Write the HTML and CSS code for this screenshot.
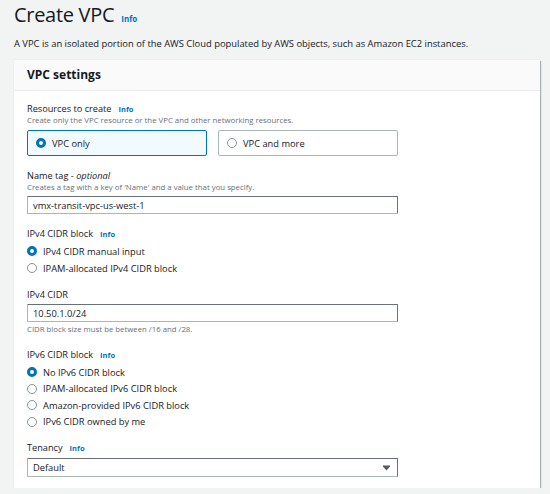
FILE: index.html
```html
<!DOCTYPE html>
<html lang="en">
<head>
<meta charset="utf-8">
<title>Create VPC</title>
<link rel="stylesheet" href="styles.css">
</head>
<body>
<div class="page">
  <h1 class="title">Create VPC<a class="info info-title">Info</a></h1>
  <p class="lead">A VPC is an isolated portion of the AWS Cloud populated by AWS objects, such as Amazon EC2 instances.</p>

  <section class="card">
    <header class="card-head">VPC settings</header>
    <div class="card-body">

      <div class="field">
        <div class="label">Resources to create<a class="info">Info</a></div>
        <div class="desc">Create only the VPC resource or the VPC and other networking resources.</div>
        <div class="tiles">
          <div class="tile selected"><span class="radio on"></span>VPC only</div>
          <div class="tile"><span class="radio"></span>VPC and more</div>
        </div>
      </div>

      <div class="field gap-md">
        <div class="label">Name tag - <em>optional</em></div>
        <div class="desc">Creates a tag with a key of 'Name' and a value that you specify.</div>
        <div class="input">vmx-transit-vpc-us-west-1</div>
      </div>

      <div class="field gap-md">
        <div class="label">IPv4 CIDR block<a class="info">Info</a></div>
        <div class="radios">
          <div class="opt"><span class="radio on"></span>IPv4 CIDR manual input</div>
          <div class="opt"><span class="radio"></span>IPAM-allocated IPv4 CIDR block</div>
        </div>
      </div>

      <div class="field gap-sm">
        <div class="label">IPv4 CIDR</div>
        <div class="input">10.50.1.0/24</div>
        <div class="desc help">CIDR block size must be between /16 and /28.</div>
      </div>

      <div class="field gap-lg">
        <div class="label">IPv6 CIDR block<a class="info">Info</a></div>
        <div class="radios six">
          <div class="opt"><span class="radio on"></span>No IPv6 CIDR block</div>
          <div class="opt"><span class="radio"></span>IPAM-allocated IPv6 CIDR block</div>
          <div class="opt"><span class="radio"></span>Amazon-provided IPv6 CIDR block</div>
          <div class="opt"><span class="radio"></span>IPv6 CIDR owned by me</div>
        </div>
      </div>

      <div class="field gap-sm">
        <div class="label">Tenancy<a class="info">Info</a></div>
        <div class="input select">
          <span>Default</span>
          <svg class="caret" width="7" height="6" viewBox="0 0 7 6"><path d="M0 0.5 H7 V1.5 L3.5 5.5 L0 1.5 Z" fill="#545b64"/></svg>
        </div>
      </div>

    </div>
  </section>
</div>
</body>
</html>
```

FILE: styles.css
```css
* { box-sizing: border-box; }

html, body {
  margin: 0;
  padding: 0;
  background: #f2f3f3;
  font-family: "Open Sans", "Noto Sans", Arial, sans-serif;
  color: #16191f;
}

.page {
  padding: 1px 10px 0 14px;
}

.title {
  margin: 0;
  font-size: 20px;
  letter-spacing: -0.3px;
  font-weight: 400;
  line-height: 28px;
  height: 28px;
}

.info {
  color: #0073bb;
  font-weight: 700;
  font-size: 7.5px;
  line-height: 1;
  letter-spacing: 0;
  margin-left: 7px;
}
.info-title { font-size: 8px; margin-left: 7px; }

.lead {
  margin: 7.5px 0 0;
  font-size: 9.4px;
  line-height: 13px;
  height: 13px;
}

.card {
  margin-top: 10.5px;
  background: #fff;
  box-shadow: 1px 1px 1px rgba(0, 28, 36, 0.3), 0 0 0 0.5px #eaeded;
}

.card-head {
  height: 31px;
  background: #fafafa;
  border-bottom: 1px solid #eaeded;
  padding: 0 13px;
  font-size: 12px;
  font-weight: 700;
  line-height: 30px;
}

.card-body {
  padding: 10.5px 142px 11px 13px;
  display: flex;
  flex-direction: column;
}

.gap-md { margin-top: 12.5px; }
.gap-sm { margin-top: 11px; }
.gap-lg { margin-top: 13px; }

.label {
  font-size: 9.2px;
  line-height: 13px;
  height: 13px;
}
.label em { font-style: italic; }

.desc {
  font-size: 7.8px;
  line-height: 11px;
  height: 11px;
  color: #687078;
}

.tiles {
  margin-top: 4.5px;
  display: grid;
  grid-template-columns: 1fr 1fr;
  gap: 11px;
}

.tile {
  height: 26px;
  border: 1px solid #aab7b8;
  border-radius: 2px;
  display: flex;
  align-items: center;
  padding-left: 8px;
  font-size: 9.3px;
}
.tile.selected {
  border-color: #0073bb;
  background: #f1faff;
}

.radio {
  width: 10px;
  height: 10px;
  border-radius: 50%;
  border: 1px solid #879596;
  background: #fff;
  margin-right: 6px;
  flex: none;
}
.radio.on {
  border: 3px solid #0073bb;
}

.input {
  margin-top: 3.5px;
  height: 18px;
  border: 1px solid #aab7b8;
  border-top-color: #687078;
  border-right-color: #687078;
  border-radius: 1px;
  display: flex;
  align-items: center;
  padding-left: 5px;
  font-size: 9.3px;
}

.help { margin-top: 2px; }

.radios {
  margin-top: 3px;
  display: flex;
  flex-direction: column;
}
.opt {
  height: 17px;
  display: flex;
  align-items: center;
  font-size: 9.3px;
}
.six .opt { height: 16.5px; }

.select {
  height: 19px;
  justify-content: space-between;
  padding-right: 7px;
  margin-top: 4px;
}
.caret { display: block; }
```
